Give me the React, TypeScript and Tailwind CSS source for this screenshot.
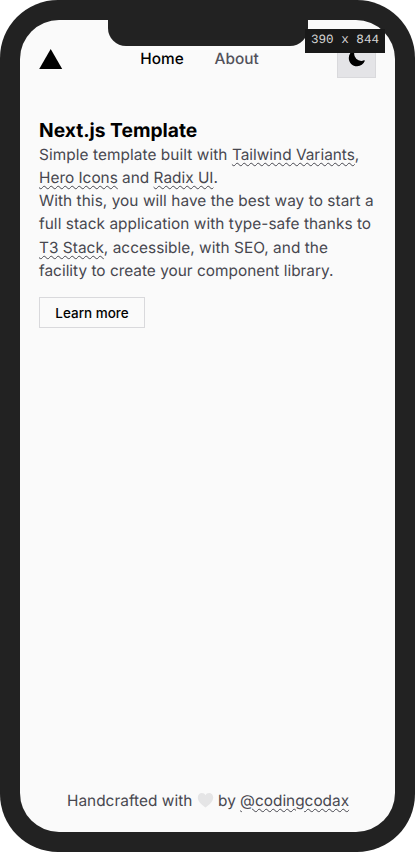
import type { ReactNode } from 'react';

function TextLink({ children }: { children: ReactNode }) {
  return (
    <a className="underline decoration-wavy decoration-[1.1px] underline-offset-[1.9px]">{children}</a>
  );
}

function Header() {
  return (
    <header className="flex h-[77px] shrink-0 items-center justify-between pl-[19px] pr-[19px]">
      <svg className="h-[20px] w-[24px]" viewBox="0 0 24 20" aria-label="Logo">
        <path d="M11.7 0 L23.2 20 H.2 Z" fill="#000" />
      </svg>
      <nav className="flex gap-[30.8px] pr-[1px] text-[15.385px] font-medium leading-[23px]">
        <a className="text-black">Home</a>
        <a className="text-[#52525b]">About</a>
      </nav>
      <button className="flex h-[39px] w-[39px] items-center justify-center border border-[#d9d9dc] bg-[#e4e4e7]">
        <svg className="h-[19px] w-[19px]" viewBox="0 0 24 24" aria-label="Dark mode">
          <path
            fillRule="evenodd"
            d="M9.528 1.718a.75.75 0 01.162.819A8.97 8.97 0 009 6a9 9 0 009 9 8.97 8.97 0 003.463-.69.75.75 0 01.981.98 10.503 10.503 0 01-9.694 6.46c-5.799 0-10.5-4.701-10.5-10.5 0-4.368 2.667-8.112 6.46-9.694a.75.75 0 01.818.162z"
            fill="#000"
          />
        </svg>
      </button>
    </header>
  );
}

export default function App() {
  return (
    <div className="h-[852px] w-[415px] bg-white font-['Inter',sans-serif] [text-rendering:geometricPrecision]">
      <div className="relative h-full w-full rounded-[58px] bg-[#222222] p-[20px]">
        <div className="flex h-full flex-col overflow-hidden rounded-[39px] bg-[#fafafa]">
          <Header />
          <main className="flex flex-1 flex-col items-start px-[19px] pt-[20px] text-[15.385px] leading-[23.2px] text-[#47474f]">
            <h1 className="h-[26px] text-[19.23px] font-bold leading-[27px] text-black">Next.js Template</h1>
            <p className="-mt-[0.15px] whitespace-nowrap">
              <span className="tracking-[0.07px]">Simple template built with </span>
              <TextLink>Tailwind Variants</TextLink>,<br />
              <TextLink>Hero Icons</TextLink> and <TextLink>Radix UI</TextLink>.<br />
              <span className="tracking-[0.06px]">With this, you will have the best way to start a</span><br />
              <span className="tracking-[0.043px]">full stack application with type-safe thanks to</span><br />
              <span className="tracking-[0.035px]">
                <TextLink>T3 Stack</TextLink>, accessible, with SEO, and the
              </span><br />
              <span className="tracking-[0.01px]">facility to create your component library.</span>
            </p>
            <button className="mt-[15px] h-[31px] w-[106px] border border-[#d9d9dc] pt-[1px] text-[13.46px] font-medium leading-[19px] text-black">
              Learn more
            </button>
          </main>
          <footer className="flex h-[64px] shrink-0 items-center justify-center whitespace-pre pl-[1px] text-[15.385px] leading-[23px] text-[#47474f]">
            <span className="tracking-[0.03px]">Handcrafted with </span>
            <svg className="ml-[0.7px] mr-[-0.7px] h-[17px] w-[17px]" viewBox="0 0 17 17" aria-label="love">
              <path
                d="M8.5 15.4C6 14 .8 10.2 .8 5.6C.8 3 2.6 1.1 4.9 1.1C6.5 1.1 7.8 2 8.5 3.3C9.2 2 10.5 1.1 12.1 1.1C14.4 1.1 16.2 3 16.2 5.6C16.2 10.2 11 14 8.5 15.4Z"
                fill="#e5e5e6"
              />
            </svg>
            <span>
              {' by '}
              <TextLink>@codingcodax</TextLink>
            </span>
          </footer>
        </div>
        <div className="absolute left-[108px] top-[19px] h-[27px] w-[200px] rounded-b-[18px] bg-[#222222]" />
        <div className="absolute left-[305px] top-[29px] flex h-[24px] w-[80px] items-center justify-center bg-[#191919] pb-[2px] font-['Liberation_Mono',monospace] text-[12.6px] text-[#d4d4d4]">
          390 x 844
        </div>
      </div>
    </div>
  );
}
